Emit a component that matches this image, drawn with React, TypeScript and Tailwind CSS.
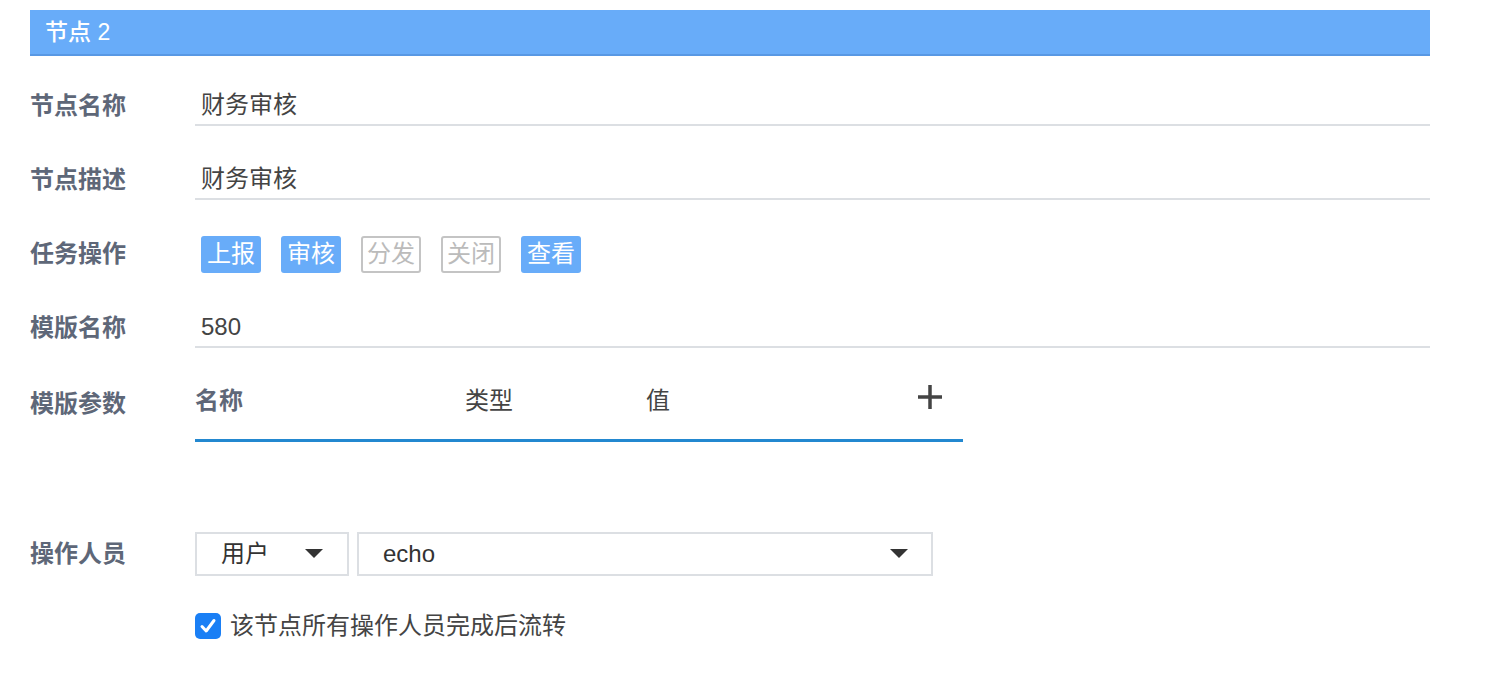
const FONT = '"Helvetica Neue", "Liberation Sans", "Noto Sans CJK SC", sans-serif'

const ACTIONS = [
  { label: '上报', on: true },
  { label: '审核', on: true },
  { label: '分发', on: false },
  { label: '关闭', on: false },
  { label: '查看', on: true },
]

function Caret() {
  return (
    <svg width="18" height="10" viewBox="0 0 18 10" className="shrink-0">
      <path d="M0 0 L18 0 L9 9 Z" fill="#333" />
    </svg>
  )
}

function Row({ label, children }: { label: string; children: React.ReactNode }) {
  return (
    <div className="flex h-[74px] items-center">
      <div className="w-[165px] shrink-0 text-[24px] font-semibold text-[#5e6778]">{label}</div>
      <div className="flex-1">{children}</div>
    </div>
  )
}

function TextField({ value }: { value: string }) {
  return (
    <div className="flex h-[40px] items-center border-b-2 border-[#dcdfe3] pl-[6px] text-[24px] text-[#444]">
      {value}
    </div>
  )
}

export default function App() {
  return (
    <div className="min-h-[690px] bg-white px-[30px] pt-[10px]" style={{ fontFamily: FONT }}>
      <div className="w-[1400px]">
        {/* Header */}
        <div className="flex h-[46px] items-center border-b-2 border-[#5898e4] bg-[#68acf9] pl-[15px] text-[23px] font-medium text-white">
          节点&nbsp;2
        </div>

        <div className="pt-[13px]">
          <Row label="节点名称">
            <TextField value="财务审核" />
          </Row>
          <Row label="节点描述">
            <TextField value="财务审核" />
          </Row>
          <Row label="任务操作">
            <div className="flex gap-[20px] pl-[6px]">
              {ACTIONS.map((a) => (
                <span
                  key={a.label}
                  className={
                    a.on
                      ? 'flex h-[37px] w-[60px] items-center justify-center rounded-[3px] bg-[#68acf9] text-[24px] text-white'
                      : 'flex h-[37px] w-[60px] items-center justify-center rounded-[3px] border-2 border-[#c4c4c4] text-[24px] text-[#bbb]'
                  }
                >
                  {a.label}
                </span>
              ))}
            </div>
          </Row>
          <Row label="模版名称">
            <TextField value="580" />
          </Row>

          {/* Template params */}
          <div className="flex">
            <div className="w-[165px] shrink-0 pt-[21px] text-[24px] font-semibold text-[#5e6778]">模版参数</div>
            <div className="flex h-[77px] w-[768px] items-center border-b-[3px] border-[#2388d0] pb-[3px]">
              <span className="w-[270px] text-[24px] font-semibold text-[#5e6778]">名称</span>
              <span className="w-[181px] text-[24px] text-[#444]">类型</span>
              <span className="flex-1 text-[24px] text-[#444]">值</span>
              <svg width="26" height="26" viewBox="0 0 26 26" className="mr-[20px] mb-[8px]">
                <path d="M13 1 V25 M1 13 H25" stroke="#444" strokeWidth="3.5" />
              </svg>
            </div>
          </div>

          {/* Operators */}
          <div className="mt-[90px] flex items-center">
            <div className="w-[165px] shrink-0 text-[24px] font-semibold text-[#5e6778]">操作人员</div>
            <div className="flex gap-[8px]">
              <div className="flex h-[44px] w-[154px] items-center justify-between border-2 border-[#dcdfe3] pl-[24px] pr-[24px] text-[24px] text-[#333]">
                <span>用户</span>
                <Caret />
              </div>
              <div className="flex h-[44px] w-[576px] items-center justify-between border-2 border-[#dcdfe3] pl-[24px] pr-[23px] text-[24px] text-[#333]">
                <span>echo</span>
                <Caret />
              </div>
            </div>
          </div>

          <label className="mt-[32px] ml-[165px] flex items-center gap-[9px] text-[24px] text-[#444]">
            <span className="flex h-[26px] w-[26px] items-center justify-center rounded-[5px] bg-[#1a7ff5]">
              <svg width="18" height="18" viewBox="0 0 18 18">
                <path d="M3 9.5 L7.2 14 L15 3.5" stroke="white" strokeWidth="3" fill="none" strokeLinecap="round" strokeLinejoin="round" />
              </svg>
            </span>
            该节点所有操作人员完成后流转
          </label>
        </div>
      </div>
    </div>
  )
}
